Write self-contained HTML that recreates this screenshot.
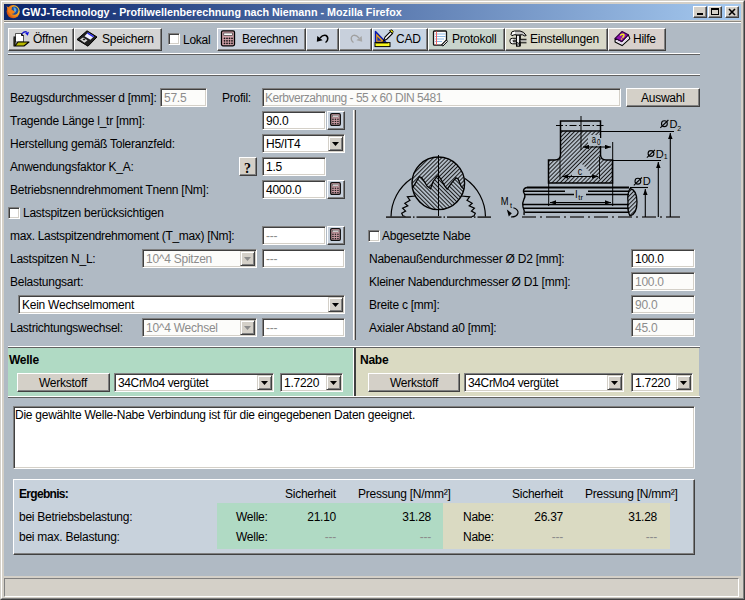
<!DOCTYPE html>
<html><head><meta charset="utf-8">
<style>
*{margin:0;padding:0;box-sizing:border-box}
html,body{width:745px;height:600px;overflow:hidden;background:#d4d0c8}
body{position:relative;font-family:"Liberation Sans",sans-serif;font-size:11.4px;color:#000}
.a{position:absolute}
.t{position:absolute;white-space:nowrap;line-height:13px;font-size:12px;letter-spacing:-0.25px;padding-top:1px}
.g{color:#8c8c8c}
.b{font-weight:bold}
.btn{position:absolute;border-top:1px solid #fff;border-left:1px solid #fff;border-right:1px solid #404040;border-bottom:1px solid #404040;box-shadow:inset -1px -1px 0 #808080;background:#d4d0c8}
.inp{position:absolute;background:#fff;border-top:1px solid #808080;border-left:1px solid #808080;border-right:1px solid #fff;border-bottom:1px solid #fff;box-shadow:inset 1px 1px 0 #404040,inset -1px -1px 0 #d4d0c8}
.calc{background:#c8d2de}
.calc:after{content:"";position:absolute;left:2px;top:1px;width:11px;height:12px}
.dis{background:#fcfcfa}
.dd{position:absolute;right:1px;top:1px;width:15px;height:15px;background:#d4d0c8;border-top:1px solid #d4d0c8;border-left:1px solid #d4d0c8;border-right:1px solid #404040;border-bottom:1px solid #404040;box-shadow:inset 1px 1px 0 #fff,inset -1px -1px 0 #808080}
.dd:after{content:"";position:absolute;left:3px;top:5px;width:7px;height:4px;background:#000;clip-path:polygon(0 0,100% 0,50% 100%)}
.dd.gr:after{background:#8c8c8c}
.cb{position:absolute;width:12px;height:12px;background:#fff;border-top:1px solid #808080;border-left:1px solid #808080;border-right:1px solid #fff;border-bottom:1px solid #fff;box-shadow:inset 1px 1px 0 #404040,inset -1px -1px 0 #d4d0c8}
.hl{position:absolute;height:2px;border-top:1px solid #fff;border-bottom:1px solid #606060}
</style></head><body>
<!-- window frame -->
<div class="a" style="left:0;top:0;width:745px;height:600px;border-top:1px solid #d4d0c8;border-left:1px solid #d4d0c8;border-right:1px solid #404040;border-bottom:1px solid #404040"></div>
<div class="a" style="left:1px;top:1px;width:743px;height:598px;border-top:1px solid #fff;border-left:1px solid #fff;border-right:1px solid #808080;border-bottom:1px solid #808080"></div>
<!-- title bar -->
<div class="a" style="left:4px;top:4px;width:737px;height:16px;background:linear-gradient(to right,#0a246a,#a6caf0)"></div>
<div class="t b" style="left:22px;top:4px;color:#fff;font-size:10.75px;line-height:14px;letter-spacing:0">GWJ-Technology - Profilwellenberechnung nach Niemann - Mozilla Firefox</div>
<!-- content bg -->
<div class="a" style="left:4px;top:20px;width:737px;height:2px;background:#d4d0c8;border-bottom:1px solid #8c8880"></div>
<div class="a" style="left:4px;top:22px;width:737px;height:554px;background:#b0bac4"></div>
<div class="a" style="left:4px;top:22px;width:737px;height:1px;background:#fff"></div>
<!-- status bar -->
<div class="a" style="left:4px;top:578px;width:735px;height:19px;border-top:1px solid #808080;border-left:1px solid #808080;border-right:1px solid #fff;border-bottom:1px solid #fff;background:#d4d0c8"></div>

<!-- toolbar -->
<div class="btn" style="left:8px;top:28px;width:66px;height:23px;background:#d4d4d4"></div>
<div class="t" style="left:33px;top:32px">Öffnen</div>
<div class="btn" style="left:74px;top:28px;width:88px;height:23px;background:#d4d4d4"></div>
<div class="t" style="left:102px;top:32px">Speichern</div>
<div class="cb" style="left:168px;top:33px"></div>
<div class="t" style="left:183px;top:33px">Lokal</div>
<div class="btn" style="left:217px;top:28px;width:89px;height:23px;background:#c8d0dc"></div>
<div class="t" style="left:242px;top:32px">Berechnen</div>
<div class="btn" style="left:306px;top:28px;width:33px;height:23px;background:#c8d0dc"></div>
<div class="btn" style="left:339px;top:28px;width:33px;height:23px;background:#c8d0dc"></div>
<div class="btn" style="left:372px;top:28px;width:56px;height:23px;background:#c8d4e2"></div>
<div class="t" style="left:396px;top:32px">CAD</div>
<div class="btn" style="left:428px;top:28px;width:77px;height:23px;background:#c8d4cc"></div>
<div class="t" style="left:452px;top:32px">Protokoll</div>
<div class="btn" style="left:505px;top:28px;width:103px;height:23px;background:#d8d8c8"></div>
<div class="t" style="left:530px;top:32px">Einstellungen</div>
<div class="btn" style="left:608px;top:28px;width:58px;height:23px;background:#d8d0cc"></div>
<div class="t" style="left:633px;top:32px">Hilfe</div>

<div class="hl" style="left:8px;top:53px;width:692px"></div>
<div class="hl" style="left:8px;top:74px;width:692px"></div>


<!-- firefox icon -->
<svg class="a" style="left:5px;top:4px" width="16" height="15" viewBox="0 0 16 15">
<defs><radialGradient id="fxg" cx="0.75" cy="0.35" r="0.85"><stop offset="0" stop-color="#fff040"/><stop offset="0.45" stop-color="#f8a020"/><stop offset="1" stop-color="#c83808"/></radialGradient></defs>
<circle cx="8.2" cy="7.6" r="6.6" fill="url(#fxg)"/>
<circle cx="9.3" cy="6.6" r="4.2" fill="#1c4c9c"/>
<path d="M8.5 3 Q11 3.5 11.5 6 Q11 8 9.5 9 L9 7 Z" fill="#58a8e0"/>
<path d="M1.5 2 L3.5 3.5 L5.5 2.5 L7 3.5 L6.5 5.5 L8 6.5 L10 7.5 L9 9.5 L6 10 L3.5 8 Z" fill="#f08018"/>
</svg>
<!-- window buttons -->
<div class="btn" style="left:693px;top:6px;width:14px;height:12px"></div>
<div class="a" style="left:697px;top:13px;width:6px;height:2px;background:#000"></div>
<div class="btn" style="left:708px;top:6px;width:14px;height:12px"></div>
<div class="a" style="left:711px;top:8px;width:8px;height:7px;border:1px solid #000;border-top-width:2px"></div>
<div class="btn" style="left:725px;top:6px;width:14px;height:12px"></div>
<svg class="a" style="left:725px;top:6px" width="14" height="12"><path d="M4 3 L10 9 M10 3 L4 9" stroke="#000" stroke-width="1.6"/></svg>

<!-- toolbar icons -->
<svg class="a" style="left:12px;top:30px" width="18" height="18" viewBox="0 0 18 18">
<path d="M3.5 12 V3.5 H9.5 L11.5 5.5 V12 Z" fill="#fff" stroke="#303030" stroke-width="0.8"/>
<path d="M9.5 3.5 V5.5 H11.5" fill="none" stroke="#000" stroke-width="1"/>
<path d="M2 7.5 V16 H12 L17 12 H6 L3 16" fill="#b8b800" stroke="#000" stroke-width="1.1" stroke-linejoin="round"/>
<path d="M1.5 7 H3 V15" fill="none" stroke="#000" stroke-width="1.2"/>
<path d="M9.8 4 Q12 0.8 15 2.2" fill="none" stroke="#1818c8" stroke-width="1.3"/>
<path d="M13.2 3.2 L17 1.8 L15.8 5.8 Z" fill="#1010e0"/>
</svg>
<svg class="a" style="left:76px;top:30px" width="22" height="17" viewBox="0 0 22 17">
<path d="M11 0.8 L21 7 L12 16.2 L1 9.5 Z" fill="#202020" stroke="#000" stroke-width="1"/>
<path d="M12 2.5 L18 6.2 L14.5 9.8 L8.5 6.2 Z" fill="#f0f0ff"/>
<path d="M12 2.5 L18 6.2 L17 7.2 L11 3.6 Z" fill="#2020f0"/>
<path d="M4 9.5 L7 7.5 L11.5 10.3 L8.5 12.8 Z" fill="#d8d8d8"/>
<path d="M6.5 9.3 L8 8.5 L9.5 9.5 L8 10.5 Z" fill="#202020"/>
</svg>
<svg class="a" style="left:220px;top:30px" width="16" height="17" viewBox="0 0 16 17">
<rect x="1.5" y="0.8" width="13" height="15" rx="1.5" fill="#d0a0a8" stroke="#000" stroke-width="1.3"/>
<rect x="3.8" y="3" width="8.5" height="2.6" fill="#fff" stroke="#202020" stroke-width="0.6"/>
<g fill="#101010"><circle cx="4.5" cy="8.3" r="0.9"/><circle cx="7" cy="8.3" r="0.9"/><circle cx="9.5" cy="8.3" r="0.9"/><circle cx="12" cy="8.3" r="0.9"/>
<circle cx="4.5" cy="10.8" r="0.9"/><circle cx="7" cy="10.8" r="0.9"/><circle cx="9.5" cy="10.8" r="0.9"/><circle cx="12" cy="10.8" r="0.9"/>
<circle cx="4.5" cy="13.3" r="0.9"/><circle cx="7" cy="13.3" r="0.9"/><circle cx="9.5" cy="13.3" r="0.9"/><circle cx="12" cy="13.3" r="0.9"/></g>
</svg>
<svg class="a" style="left:315px;top:33px" width="16" height="11" viewBox="0 0 16 11">
<path d="M5 5 Q8 1.5 11 2.5 Q13.5 4 12.5 7 Q12 8.5 10.5 9.5" fill="none" stroke="#000" stroke-width="1.5"/>
<path d="M1.8 8.8 L2.3 3 L7.6 7.2 Z" fill="#000"/>
</svg>
<svg class="a" style="left:348px;top:33px" width="16" height="11" viewBox="0 0 16 11">
<path d="M11 5 Q8 1.5 5 2.5 Q2.5 4 3.5 7 Q4 8.5 5.5 9.5" fill="none" stroke="#a0a0a0" stroke-width="1.3"/>
<path d="M14.2 8.8 L13.7 3 L8.4 7.2 Z" fill="#a8a8a8"/>
</svg>
<svg class="a" style="left:374px;top:29px" width="20" height="19" viewBox="0 0 20 19">
<path d="M1.5 2.5 V13.5 H12 Z" fill="#f0a010" stroke="#0818b0" stroke-width="1.4" stroke-linejoin="round"/>
<path d="M3.3 7.5 V11.7 H7.5 Z" fill="#1830b0"/>
<rect x="1" y="13.6" width="15" height="4" fill="#f8f820" stroke="#000" stroke-width="1"/>
<path d="M3 13.6 V15 M5 13.6 V15 M7 13.6 V15 M9 13.6 V15 M11 13.6 V15 M13 13.6 V15" stroke="#000" stroke-width="0.7"/>
<path d="M9.5 12 L11 8 L16.5 2.5 L18.5 4.5 L13 10 Z" fill="#fff" stroke="#000" stroke-width="1.1"/>
<path d="M15.5 1.5 L18 0.8 L19.2 2.5 L18.5 4.5 Z" fill="#f0f010" stroke="#000" stroke-width="0.8"/>
</svg>
<svg class="a" style="left:432px;top:30px" width="17" height="17" viewBox="0 0 17 17">
<path d="M1.5 2 Q1.5 1 2.5 1 H13.5 Q14.5 1 14.5 2 V10 L9.5 15.2 H2.5 Q1.5 15.2 1.5 14.2 Z" fill="#fff" stroke="#101010" stroke-width="1.3"/>
<path d="M3 4 H13.5 M3 6.5 H13.5 M3 9 H12 M3 11.5 H10" stroke="#80b0e0" stroke-width="0.9"/>
<path d="M4.5 1.5 V15" stroke="#f06060" stroke-width="1"/>
<path d="M9.5 15.2 L14.5 10 L15.5 11.5 L11 16 Z" fill="#e0e0e0" stroke="#101010" stroke-width="1"/>
</svg>
<svg class="a" style="left:508px;top:30px" width="20" height="17" viewBox="0 0 20 17">
<path d="M3 4.5 Q3 1 6.5 1 H12 Q16 1.5 18.2 5.5 L16.8 6 Q14.5 4.2 12.3 4.8 V5.2 H8.2 V4.8 Q6 4.2 4 5.8 Z" fill="#c8c8c8" stroke="#000" stroke-width="1"/>
<path d="M4.2 2.5 Q5 1.8 7 1.8 V4 Q5 4 4.2 4.8 Z" fill="#fff"/>
<rect x="8.5" y="5.2" width="3.5" height="11" fill="#f0f0f0" stroke="#000" stroke-width="1"/>
<path d="M12 5.5 V16" stroke="#000" stroke-width="1.4"/>
<path d="M2 10 Q2 8.3 4.5 8.3 H8.5 V10.2 H5.5 Q4.5 10.6 5.5 11.8 H8.5 V13.8 H4.5 Q2 13.8 2 11.5 Z" fill="#f4f4f4" stroke="#000" stroke-width="1"/>
<path d="M12.5 9.3 H18.5 M12.5 12.8 H18.5" stroke="#000" stroke-width="1"/>
<path d="M12.5 10.8 H18.5" stroke="#a0a0a0" stroke-width="1.4"/>
<g fill="#000"><rect x="8.5" y="12" width="1.2" height="1.2"/><rect x="10.8" y="12" width="1.2" height="1.2"/><rect x="9.6" y="13.2" width="1.2" height="1.2"/><rect x="8.5" y="14.4" width="1.2" height="1.2"/><rect x="10.8" y="14.4" width="1.2" height="1.2"/></g>
</svg>
<svg class="a" style="left:613px;top:30px" width="19" height="17" viewBox="0 0 19 17">
<path d="M2.1 8.3 L8.7 11.6 L15.3 4.8 L16.8 8.6 L9.1 15.6 L2.1 11.9 Z" fill="#fff" stroke="#000" stroke-width="1.1" stroke-linejoin="round"/>
<path d="M3 10.5 L9 13.5 L16 7" fill="none" stroke="#d0b0e0" stroke-width="0.8"/>
<path d="M2.1 8.3 L9.1 1.5 L15.3 4.8 L8.7 11.6 Z" fill="#9010b0" stroke="#300040" stroke-width="1.1" stroke-linejoin="round"/>
<path d="M7.3 5.6 Q8 4 10 4.3 Q11.8 5 10.5 6.6 L9.3 7.6" fill="none" stroke="#f0f020" stroke-width="1.5"/>
<circle cx="8.6" cy="9" r="0.8" fill="#f0f020"/>
</svg>

<!-- row 1 -->
<div class="t" style="left:10px;top:91px">Bezugsdurchmesser d [mm]:</div>
<div class="inp dis" style="left:160px;top:88px;width:47px;height:19px"></div>
<div class="t g" style="left:164px;top:91px">57.5</div>
<div class="t" style="left:222px;top:91px">Profil:</div>
<div class="inp dis" style="left:262px;top:88px;width:359px;height:19px"></div>
<div class="t g" style="left:265px;top:91px;letter-spacing:-0.46px">Kerbverzahnung - 55 x 60 DIN 5481</div>
<div class="btn" style="left:626px;top:88px;width:74px;height:19px"></div>
<div class="t" style="left:641px;top:91px">Auswahl</div>


<!-- left column -->
<div class="t" style="left:10px;top:114px">Tragende Länge l_tr [mm]:</div>
<div class="inp" style="left:262px;top:111px;width:64px;height:19px"></div>
<div class="t" style="left:266px;top:114px">90.0</div>
<div class="btn calc" style="left:327px;top:111px;width:18px;height:19px"><svg class="a" style="left:2px;top:1px" width="11" height="13" viewBox="0 0 11 13"><rect x="0.7" y="0.7" width="9.6" height="11.6" rx="1.2" fill="#d0a0a8" stroke="#101010" stroke-width="1.3"/><rect x="2.3" y="2.2" width="6.4" height="1.8" fill="#f4f4f4" stroke="#303030" stroke-width="0.4"/><g fill="#202020"><rect x="2.2" y="5.6" width="1.5" height="1.3"/><rect x="4.7" y="5.6" width="1.5" height="1.3"/><rect x="7.2" y="5.6" width="1.5" height="1.3"/><rect x="2.2" y="7.8" width="1.5" height="1.3"/><rect x="4.7" y="7.8" width="1.5" height="1.3"/><rect x="7.2" y="7.8" width="1.5" height="1.3"/><rect x="2.2" y="10" width="1.5" height="1.3"/><rect x="4.7" y="10" width="1.5" height="1.3"/><rect x="7.2" y="10" width="1.5" height="1.3"/></g></svg></div>
<div class="t" style="left:10px;top:137px">Herstellung gemäß Toleranzfeld:</div>
<div class="inp" style="left:262px;top:134px;width:83px;height:19px"><div class="dd"></div></div>
<div class="t" style="left:266px;top:137px">H5/IT4</div>
<div class="t" style="left:10px;top:160px">Anwendungsfaktor K_A:</div>
<div class="btn" style="left:239px;top:157px;width:18px;height:19px"></div>
<div class="t b" style="left:244px;top:159px;font-family:'Liberation Serif';font-size:14px;line-height:17px">?</div>
<div class="inp" style="left:262px;top:157px;width:64px;height:19px"></div>
<div class="t" style="left:266px;top:160px">1.5</div>
<div class="t" style="left:10px;top:183px">Betriebsnenndrehmoment Tnenn [Nm]:</div>
<div class="inp" style="left:262px;top:180px;width:64px;height:19px"></div>
<div class="t" style="left:266px;top:183px">4000.0</div>
<div class="btn calc" style="left:327px;top:180px;width:18px;height:19px"><svg class="a" style="left:2px;top:1px" width="11" height="13" viewBox="0 0 11 13"><rect x="0.7" y="0.7" width="9.6" height="11.6" rx="1.2" fill="#d0a0a8" stroke="#101010" stroke-width="1.3"/><rect x="2.3" y="2.2" width="6.4" height="1.8" fill="#f4f4f4" stroke="#303030" stroke-width="0.4"/><g fill="#202020"><rect x="2.2" y="5.6" width="1.5" height="1.3"/><rect x="4.7" y="5.6" width="1.5" height="1.3"/><rect x="7.2" y="5.6" width="1.5" height="1.3"/><rect x="2.2" y="7.8" width="1.5" height="1.3"/><rect x="4.7" y="7.8" width="1.5" height="1.3"/><rect x="7.2" y="7.8" width="1.5" height="1.3"/><rect x="2.2" y="10" width="1.5" height="1.3"/><rect x="4.7" y="10" width="1.5" height="1.3"/><rect x="7.2" y="10" width="1.5" height="1.3"/></g></svg></div>
<div class="cb" style="left:8px;top:207px"></div>
<div class="t" style="left:23px;top:206px">Lastspitzen berücksichtigen</div>
<div class="t" style="left:10px;top:229px;letter-spacing:-0.33px">max. Lastspitzendrehmoment (T_max) [Nm]:</div>
<div class="inp" style="left:262px;top:226px;width:64px;height:19px"></div>
<div class="t g" style="left:266px;top:229px">---</div>
<div class="btn calc" style="left:327px;top:226px;width:18px;height:19px"><svg class="a" style="left:2px;top:1px" width="11" height="13" viewBox="0 0 11 13"><rect x="0.7" y="0.7" width="9.6" height="11.6" rx="1.2" fill="#d0a0a8" stroke="#101010" stroke-width="1.3"/><rect x="2.3" y="2.2" width="6.4" height="1.8" fill="#f4f4f4" stroke="#303030" stroke-width="0.4"/><g fill="#202020"><rect x="2.2" y="5.6" width="1.5" height="1.3"/><rect x="4.7" y="5.6" width="1.5" height="1.3"/><rect x="7.2" y="5.6" width="1.5" height="1.3"/><rect x="2.2" y="7.8" width="1.5" height="1.3"/><rect x="4.7" y="7.8" width="1.5" height="1.3"/><rect x="7.2" y="7.8" width="1.5" height="1.3"/><rect x="2.2" y="10" width="1.5" height="1.3"/><rect x="4.7" y="10" width="1.5" height="1.3"/><rect x="7.2" y="10" width="1.5" height="1.3"/></g></svg></div>
<div class="t" style="left:10px;top:252px">Lastspitzen N_L:</div>
<div class="inp dis" style="left:142px;top:249px;width:115px;height:19px"><div class="dd gr"></div></div>
<div class="t g" style="left:146px;top:252px">10^4 Spitzen</div>
<div class="inp" style="left:262px;top:249px;width:83px;height:19px"></div>
<div class="t g" style="left:266px;top:252px">---</div>
<div class="t" style="left:10px;top:275px">Belastungsart:</div>
<div class="inp" style="left:18px;top:295px;width:327px;height:19px"><div class="dd"></div></div>
<div class="t" style="left:22px;top:298px">Kein Wechselmoment</div>
<div class="t" style="left:10px;top:321px">Lastrichtungswechsel:</div>
<div class="inp dis" style="left:142px;top:318px;width:115px;height:19px"><div class="dd gr"></div></div>
<div class="t g" style="left:146px;top:321px">10^4 Wechsel</div>
<div class="inp" style="left:262px;top:318px;width:83px;height:19px"></div>
<div class="t g" style="left:266px;top:321px">---</div>
<!-- vertical separator -->
<div class="a" style="left:353px;top:110px;width:1px;height:230px;background:#fff"></div>
<div class="a" style="left:354px;top:110px;width:1px;height:230px;background:#c0bab4"></div>
<div class="a" style="left:355px;top:110px;width:1px;height:230px;background:#404040"></div>

<!-- drawing -->
<svg class="a" style="left:380px;top:110px" width="330" height="115" viewBox="380 110 330 115">
<defs>
<pattern id="h1" patternUnits="userSpaceOnUse" width="2.9" height="2.9" patternTransform="rotate(45)"><rect x="0" y="0" width="0.9" height="2.9" fill="#101010"/></pattern>
<pattern id="h2" patternUnits="userSpaceOnUse" width="2.9" height="2.9" patternTransform="rotate(-45)"><rect x="0" y="0" width="0.9" height="2.9" fill="#101010"/></pattern>
<marker id="ar" viewBox="0 0 8 6" refX="8" refY="3" markerWidth="6.5" markerHeight="4.5" orient="auto-start-reverse" markerUnits="userSpaceOnUse"><path d="M0 0 L8 3 L0 6 Z" fill="#000"/></marker>
<clipPath id="cc"><circle cx="438.3" cy="183.3" r="26.3"/></clipPath>
</defs>
<g fill="none" stroke="#000">
<!-- left view -->
<path d="M391 217 A47 47 0 0 1 411.5 178.5" stroke-width="1.2"/>
<path d="M485.5 217 A47 47 0 0 0 465 178.5" stroke-width="1.2"/>
<g clip-path="url(#cc)">
<rect x="410" y="155" width="58" height="40" fill="url(#h1)" stroke="none"/>
<path d="M410 210 V187 L413 187 L419.3 176.7 L421.5 177.5 L424 181 L427.2 186.3 L430.5 188.8 L433 181.7 L436.7 176.7 L438.4 175.4 L441.3 180 L444.7 185.8 L447.2 189.2 L451.3 183.3 L455.9 177.9 L458 178.8 L461.3 186.7 L464.7 190 L468 191 V212 Z" fill="#b0bac4" stroke="none"/>
<path d="M410 210 V187 L413 187 L419.3 176.7 L421.5 177.5 L424 181 L427.2 186.3 L430.5 188.8 L433 181.7 L436.7 176.7 L438.4 175.4 L441.3 180 L444.7 185.8 L447.2 189.2 L451.3 183.3 L455.9 177.9 L458 178.8 L461.3 186.7 L464.7 190 L468 191 V212 Z" fill="url(#h2)" stroke="none"/>
<path d="M410 187 L413 187 L419.3 176.7 L421.5 177.5 L424 181 L427.2 186.3 L430.5 188.8 L433 181.7 L436.7 176.7 L438.4 175.4 L441.3 180 L444.7 185.8 L447.2 189.2 L451.3 183.3 L455.9 177.9 L458 178.8 L461.3 186.7 L464.7 190 L468 191" stroke-width="1.3" fill="none"/>
</g>
<circle cx="438.3" cy="183.3" r="26.3" stroke-width="1.4"/>
<path d="M415.3 196 L407.4 196.8 L410 200.3 L404.8 203.3 L407.8 205.9 L402.6 208.1 L405.6 211.1 L401.7 213.3 L403 215.9 L405.6 216.8" stroke-width="1.2"/>
<path d="M461.3 196 L469.6 196.8 L467 200.3 L472.2 203.3 L469.2 205.9 L474.4 208.1 L471.4 211.1 L475.3 213.3 L474 215.9 L471.4 216.8" stroke-width="1.2"/>
<path d="M438.5 155 V216" stroke-width="1"/>
<path d="M386 217.2 H491" stroke="#303030" stroke-width="1.8" stroke-dasharray="25 2 1.5 2"/>
<!-- hub -->
<path d="M560.5 131 H600.5 V155 Q601 160 606 160 H612.5 V183 H548.5 V160 H555 Q560 160 560.5 155 Z" fill="url(#h1)" stroke="none"/>
<path d="M581 163 L590 172 V177 H572 V172 Z" fill="#b0bac4" stroke="none"/>
<path d="M560.5 131 V121 H600.5 V131 M560.5 131 H600.5 M560.5 131 V155 Q560 160 555 160 H548.5 V183 H612.5 V160 H606 Q601 160 600.5 155 V131" stroke-width="1.5"/>
<path d="M556 125.5 H605" stroke-width="1.2" stroke-dasharray="7 2.5 1.5 2.5"/>
<path d="M581 116 V150" stroke-width="1"/>
<rect x="588" y="135" width="12" height="11" fill="#b0bac4" stroke="none"/><rect x="596" y="138" width="6" height="8" fill="#b0bac4" stroke="none"/><path d="M583 147 H611" stroke-width="1" marker-start="url(#ar)" marker-end="url(#ar)"/>
<path d="M612.7 142 V206" stroke-width="1"/>
<path d="M548.7 183 V206" stroke-width="1"/>
<path d="M560 157 V179 M599.5 157 V179" stroke-width="0.9"/>
<path d="M562 176.5 H598" stroke-width="1" marker-start="url(#ar)" marker-end="url(#ar)"/>
<!-- shaft -->
<path d="M527 187.5 H629" stroke-width="2"/>
<path d="M524 191.2 H565 M588 191.2 H629" stroke-width="1.6"/>
<path d="M525 194.5 H574 M586 194.5 H629" stroke-width="1.3"/>
<path d="M522.5 204.5 H629" stroke-width="1.7"/>
<path d="M523 208.3 H629" stroke-width="1.6"/>
<path d="M525 212.3 H629" stroke-width="1.6"/>
<path d="M527 187.5 Q523 188 523.5 192 Q526 196 524 199 Q522 203 523 207 Q525 211 524 215" stroke-width="1.4"/>
<path d="M550 202.5 H611" stroke-width="1" marker-start="url(#ar)" marker-end="url(#ar)"/>
<path d="M630 188.5 Q637 190 637 202 Q637 214 630 216 Q627 210 628 202 Q627 194 630 188.5 Z" fill="url(#h1)" stroke-width="1.3"/>
<path d="M522 217 H680" stroke="#303030" stroke-width="1.6" stroke-dasharray="14 4 2 4"/>
<path d="M600.5 131.5 H674" stroke-width="1.1"/>
<path d="M612.5 160.5 H661" stroke-width="1.1"/>
<path d="M630 187.5 H648" stroke-width="1.1"/>
<path d="M670.3 217 V133" stroke-width="1.1" marker-end="url(#ar)"/>
<path d="M658.3 217 V162" stroke-width="1.1" marker-end="url(#ar)"/>
<path d="M645.3 217 V189" stroke-width="1.1" marker-end="url(#ar)"/>
<path d="M513.4 207.8 Q518.5 209.5 518 213 Q517 217 511 217" stroke-width="1.2"/>
</g>
<path d="M506.8 209.5 L511.8 213.2 L508.8 216.5 Z" fill="#000"/>
<g font-family="Liberation Sans" fill="#000">
<text x="591.8" y="142.6" font-size="11" textLength="4.2" lengthAdjust="spacingAndGlyphs">a</text><text x="597" y="145.3" font-size="8.2" textLength="3.6" lengthAdjust="spacingAndGlyphs">0</text>
<text x="577.8" y="174.8" font-size="11" textLength="4.4" lengthAdjust="spacingAndGlyphs">c</text>
<text x="575.3" y="198" font-size="10">l</text><text x="578.3" y="200" font-size="7.5">tr</text>
<text x="500.8" y="205.3" font-size="10.2" textLength="7.8" lengthAdjust="spacingAndGlyphs">M</text><text x="510" y="207.5" font-size="7.5">t</text>
<text x="669.5" y="127.8" font-size="11">D</text><text x="677.3" y="130.6" font-size="7">2</text>
<text x="655.8" y="157.6" font-size="11">D</text><text x="663.8" y="159.2" font-size="7">1</text>
<text x="642.8" y="185.2" font-size="11">D</text>
</g>
<g fill="none" stroke="#000" stroke-width="1.1">
<circle cx="664.4" cy="123.7" r="2.9"/><path d="M660.3 127.8 L668.4 120"/>
<circle cx="651" cy="153.5" r="2.9"/><path d="M646.9 157.6 L655 149.8"/>
<circle cx="637.9" cy="181.2" r="2.9"/><path d="M633.8 185.3 L641.9 177.5"/>
</g>
</svg>

<!-- right column -->
<div class="cb" style="left:368px;top:230px"></div>
<div class="t" style="left:382px;top:229px">Abgesetzte Nabe</div>
<div class="t" style="left:369px;top:252px">Nabenaußendurchmesser Ø D2 [mm]:</div>
<div class="inp" style="left:631px;top:249px;width:64px;height:19px"></div>
<div class="t" style="left:635px;top:252px">100.0</div>
<div class="t" style="left:369px;top:275px">Kleiner Nabendurchmesser Ø D1 [mm]:</div>
<div class="inp dis" style="left:631px;top:272px;width:64px;height:19px"></div>
<div class="t g" style="left:635px;top:275px">100.0</div>
<div class="t" style="left:369px;top:298px">Breite c [mm]:</div>
<div class="inp dis" style="left:631px;top:295px;width:64px;height:19px"></div>
<div class="t g" style="left:635px;top:298px">90.0</div>
<div class="t" style="left:369px;top:321px">Axialer Abstand a0 [mm]:</div>
<div class="inp dis" style="left:631px;top:318px;width:64px;height:19px"></div>
<div class="t g" style="left:635px;top:321px">45.0</div>

<!-- Welle / Nabe panels -->
<div class="hl" style="left:8px;top:346px;width:692px"></div>
<div class="a" style="left:8px;top:348px;width:345px;height:48px;background:#b0dac4"></div>
<div class="a" style="left:353px;top:348px;width:1px;height:48px;background:#fff"></div>
<div class="a" style="left:354px;top:348px;width:2px;height:48px;background:#404040"></div>
<div class="a" style="left:356px;top:348px;width:343px;height:48px;background:#dadac2"></div>
<div class="hl" style="left:8px;top:396px;width:692px"></div>
<div class="t b" style="left:9px;top:353px">Welle</div>
<div class="btn" style="left:17px;top:373px;width:93px;height:19px"></div>
<div class="t" style="left:39px;top:376px">Werkstoff</div>
<div class="inp" style="left:114px;top:373px;width:160px;height:19px"><div class="dd"></div></div>
<div class="t" style="left:118px;top:376px;letter-spacing:-0.37px">34CrMo4 vergütet</div>
<div class="inp" style="left:280px;top:373px;width:63px;height:19px"><div class="dd"></div></div>
<div class="t" style="left:284px;top:376px">1.7220</div>
<div class="t b" style="left:360px;top:353px">Nabe</div>
<div class="btn" style="left:368px;top:373px;width:92px;height:19px"></div>
<div class="t" style="left:390px;top:376px">Werkstoff</div>
<div class="inp" style="left:464px;top:373px;width:160px;height:19px"><div class="dd"></div></div>
<div class="t" style="left:468px;top:376px;letter-spacing:-0.37px">34CrMo4 vergütet</div>
<div class="inp" style="left:631px;top:373px;width:62px;height:19px"><div class="dd"></div></div>
<div class="t" style="left:635px;top:376px">1.7220</div>

<!-- message area -->
<div class="inp" style="left:13px;top:406px;width:682px;height:63px"></div>
<div class="t" style="left:15px;top:408px">Die gewählte Welle-Nabe Verbindung ist für die eingegebenen Daten geeignet.</div>

<!-- results -->
<div class="btn" style="left:13px;top:479px;width:682px;height:76px;background:#c8d2dc"></div>
<div class="a" style="left:217px;top:503px;width:226px;height:46px;background:#b0dac4"></div>
<div class="a" style="left:443px;top:503px;width:227px;height:46px;background:#dadac2"></div>
<div class="t b" style="left:19px;top:487px;letter-spacing:-0.7px">Ergebnis:</div>
<div class="t" style="left:285px;top:487px">Sicherheit</div>
<div class="t" style="left:358px;top:487px">Pressung [N/mm²]</div>
<div class="t" style="left:512px;top:487px">Sicherheit</div>
<div class="t" style="left:585px;top:487px">Pressung [N/mm²]</div>
<div class="t" style="left:19px;top:510px">bei Betriebsbelastung:</div>
<div class="t" style="left:19px;top:530px">bei max. Belastung:</div>
<div class="t" style="left:236px;top:510px">Welle:</div>
<div class="t" style="left:236px;top:530px">Welle:</div>
<div class="t" style="left:463px;top:510px">Nabe:</div>
<div class="t" style="left:463px;top:530px">Nabe:</div>
<div class="t" style="right:409px;top:510px">21.10</div>
<div class="t g" style="right:409px;top:530px">---</div>
<div class="t" style="right:314px;top:510px">31.28</div>
<div class="t g" style="right:314px;top:530px">---</div>
<div class="t" style="right:182px;top:510px">26.37</div>
<div class="t g" style="right:182px;top:530px">---</div>
<div class="t" style="right:88px;top:510px">31.28</div>
<div class="t g" style="right:88px;top:530px">---</div>
</body></html>
